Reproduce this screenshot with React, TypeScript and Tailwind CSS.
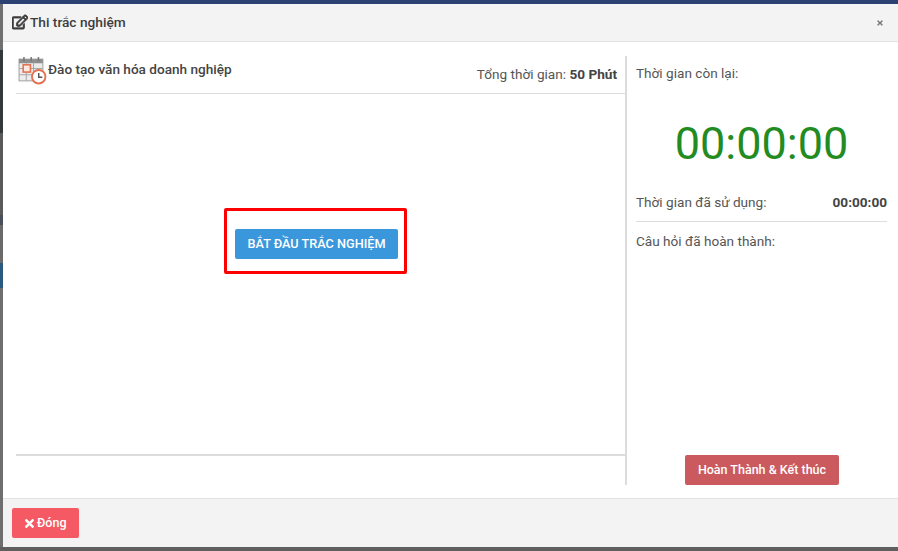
import React from "react";
import { FaRegEdit, FaTimes } from "react-icons/fa";

function CalendarClock() {
  return (
    <svg width="29" height="29" viewBox="0 0 28 28" className="block">
      <rect x="1" y="3" width="23" height="21" fill="#ececec" stroke="#a3a3a3" strokeWidth="1" />
      <rect x="1" y="3" width="23" height="4" fill="#8f8f8f" />
      <rect x="5" y="1" width="1.5" height="4" fill="#777" />
      <rect x="12" y="1" width="1.5" height="4" fill="#777" />
      <rect x="19" y="1" width="1.5" height="4" fill="#777" />
      <path d="M1 12H24M1 18H24M8 7V24M15 7V24" stroke="#a8a8a8" strokeWidth="1" fill="none" />
      <rect x="5" y="8.5" width="7" height="7" fill="#fbe9e2" stroke="#e2714f" strokeWidth="1.5" />
      <circle cx="20" cy="20" r="6.5" fill="#fff" stroke="#e2714f" strokeWidth="1.8" />
      <path d="M20 16.5V20.5H23.5" stroke="#555" strokeWidth="1.4" fill="none" />
    </svg>
  );
}

export default function App() {
  return (
    <div className="w-[898px] h-[551px] overflow-hidden bg-[#5f5f5f] font-['Roboto',sans-serif] text-[#333]">
      <div className="h-[4px] bg-[#2b4172]" />
      <div className="flex h-[543px]">
        <div className="w-[3px] shrink-0 flex flex-col">
          <div className="h-[46px] bg-[#707070]" />
          <div className="h-[83px] bg-[#33383a]" />
          <div className="h-[82px] bg-[#5a5a5a]" />
          <div className="h-[10px] bg-[#4a4f5c]" />
          <div className="h-[38px] bg-[#6a6a6a]" />
          <div className="h-[25px] bg-[#2a5a80]" />
          <div className="flex-1 bg-[#6e6e6e]" />
        </div>
        <div className="flex-1 flex flex-col bg-white">
          <header className="h-[38px] shrink-0 flex items-center justify-between bg-[#f3f3f3] border-b border-[#e2e2e2] pl-[9px] pr-[14px]">
            <div className="flex items-center gap-[2px] text-[13.7px] font-medium text-[#3d3d3d]">
              <FaRegEdit className="text-[16px] text-[#3d3d3d] stroke-[30px]" />
              <span>Thi trắc nghiệm</span>
            </div>
            <FaTimes className="text-[8px] text-[#777]" />
          </header>

          <main className="flex-1 min-h-0 flex pl-[13px] pr-[11px] pt-[14px] pb-[13px]">
            <section className="w-[611px] shrink-0 flex flex-col border-r-2 border-[#dcdcdc]">
              <div className="h-[38px] shrink-0 flex justify-between border-b border-[#dedede]">
                <div className="flex pl-[2px] gap-[1px]">
                  <CalendarClock />
                  <span className="text-[13.6px] font-medium text-[#444] leading-[26px]">Đào tạo văn hóa doanh nghiệp</span>
                </div>
                <div className="pr-[8px] pt-[9px] text-[13.6px] leading-[18px] text-[#555]">
                  Tổng thời gian: <b className="font-bold text-[#444]">50 Phút</b>
                </div>
              </div>
              <div className="flex-1 flex items-center justify-center pb-[67px] pr-[10px]">
                <div className="w-[183px] h-[66px] border-[3px] border-[#f00] rounded-[2px] flex items-center justify-center pt-[6px] pl-[2px]">
                  <button className="w-[163px] h-[30px] rounded-[2px] bg-[#3a97dc] text-white text-[12.7px] font-medium">BẮT ĐẦU TRẮC NGHIỆM</button>
                </div>
              </div>
              <div className="h-[31px] shrink-0 border-t-2 border-[#dcdcdc]" />
            </section>

            <aside className="flex-1 flex flex-col pl-[9px]">
              <div className="pt-[8px] pb-[1px] text-[13.6px] leading-[18px] text-[#555]">Thời gian còn lại:</div>
              <div className="mt-[33px] text-center text-[45px] leading-[56px] text-[#228b22] font-normal">00:00:00</div>
              <div className="mt-[20px] h-[30px] flex justify-between border-b border-[#dedede] text-[13.6px] leading-[20px] text-[#555]">
                <span>Thời gian đã sử dụng:</span>
                <b className="font-bold text-[#444]">00:00:00</b>
              </div>
              <div className="mt-[10px] text-[13.6px] leading-[18px] text-[#555]">Câu hỏi đã hoàn thành:</div>
              <div className="mt-auto flex justify-center pl-[1px]">
                <button className="w-[154px] h-[30px] rounded-[2px] bg-[#cb5a5e] text-white text-[12.5px] font-medium">Hoàn Thành &amp; Kết thúc</button>
              </div>
            </aside>
          </main>

          <footer className="h-[49px] shrink-0 bg-[#f3f3f3] border-t border-[#e2e2e2] flex items-center pl-[9px]">
            <button className="w-[67px] h-[30px] rounded-[2px] bg-[#f55a64] text-white text-[12.5px] font-medium flex items-center pl-[11px] gap-[1px]">
              <FaTimes className="text-[13px]" />
              <span>Đóng</span>
            </button>
          </footer>
        </div>
      </div>
    </div>
  );
}
